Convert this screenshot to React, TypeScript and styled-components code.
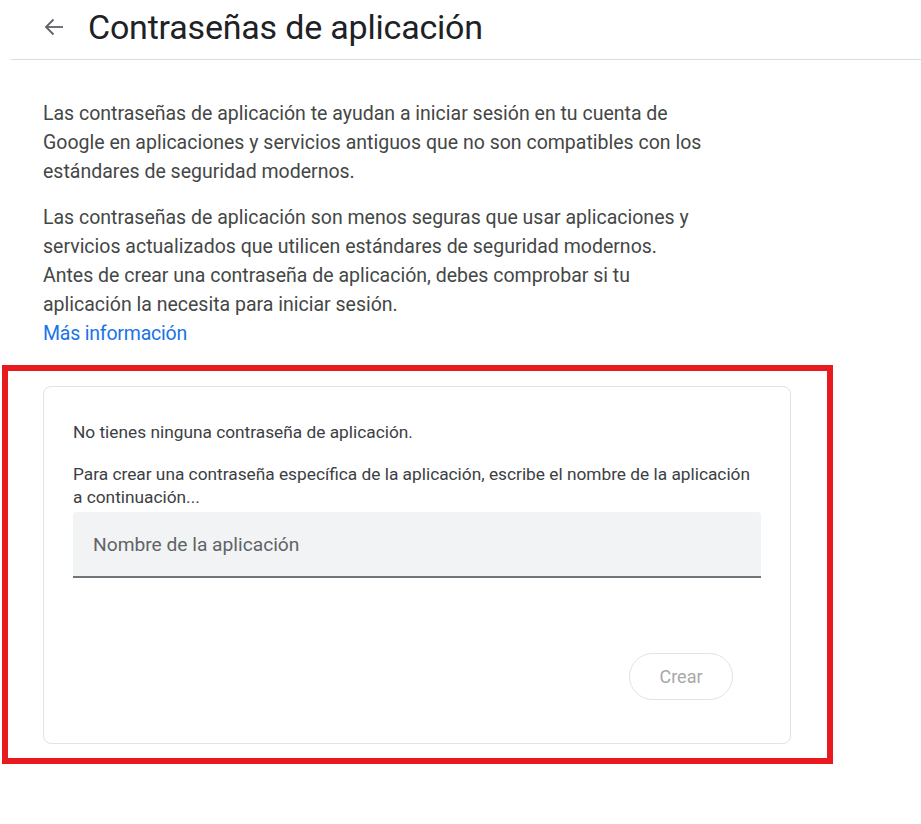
import React from 'react';
import styled, { createGlobalStyle } from 'styled-components';

const GlobalStyle = createGlobalStyle`
  body {
    margin: 0;
    background: #fff;
    font-family: Roboto, "Liberation Sans", Arial, sans-serif;
    color: #3c4043;
  }
`;

const Page = styled.div`
  width: 921px;
  min-height: 824px;
  background: #fff;
`;

const Header = styled.header`
  display: flex;
  align-items: center;
  gap: 24px;
  height: 60px;
  margin-left: 11px;
  padding-left: 33px;
  border-bottom: 1px solid #dadce0;
  box-sizing: border-box;
`;

const BackButton = styled.button`
  display: flex;
  align-items: center;
  justify-content: center;
  padding: 0;
  border: none;
  background: none;
  cursor: pointer;
  color: #5f6368;
  margin-top: -6px;
`;

const Title = styled.h1`
  margin: -6px 0 0;
  font-family: Roboto, "Open Sans", sans-serif;
  font-size: 34px;
  font-weight: 400;
  color: #202124;
  letter-spacing: -0.2px;
`;

const Intro = styled.section`
  padding: 39px 0 0 43px;
`;

const Paragraph = styled.p`
  margin: 0 0 17px;
  font-size: 19.5px;
  line-height: 29px;
  color: #444746;
  white-space: nowrap;
`;

const MoreLink = styled.a`
  color: #1a73e8;
  text-decoration: none;
  letter-spacing: -0.2px;
`;

const Highlight = styled.div`
  width: 831px;
  margin: 3px 0 0 2px;
  padding: 15px 36px 14px 35px;
  border: 6px solid #e8191f;
  box-sizing: border-box;
`;

const Card = styled.div`
  border: 1px solid #e3e3e3;
  border-radius: 8px;
  padding: 34px 29px 43px;
  display: flex;
  flex-direction: column;
`;

const CardText = styled.p<{ $gap?: number }>`
  margin: 0 0 ${p => p.$gap ?? 0}px;
  font-size: 17.3px;
  line-height: 23px;
  color: #3c4043;
  white-space: nowrap;
`;

const Field = styled.input`
  height: 66px;
  margin-top: 3px;
  padding: 0 20px;
  border: none;
  border-bottom: 2px solid #70757a;
  border-radius: 4px 4px 0 0;
  background: #f1f3f4;
  font-family: inherit;
  font-size: 19.2px;
  color: #202124;
  box-sizing: border-box;
  outline: none;

  &::placeholder {
    color: #5f6368;
  }
`;

const Actions = styled.div`
  display: flex;
  justify-content: flex-end;
  padding-right: 28px;
  margin-top: 75px;
`;

const CreateButton = styled.button`
  width: 104px;
  height: 47px;
  border: 1px solid #e3e3e3;
  border-radius: 24px;
  background: #fff;
  font-family: inherit;
  font-size: 18px;
  color: #a8a8a8;
  cursor: default;
`;

const BackArrow = () => (
  <svg width="20" height="20" viewBox="0 0 20 20" fill="none" stroke="currentColor" strokeWidth="1.8">
    <path d="M19 10H2" />
    <path d="M9.5 2.5 2 10l7.5 7.5" />
  </svg>
);

export default function App() {
  return (
    <Page>
      <GlobalStyle />
      <Header>
        <BackButton aria-label="Atrás">
          <BackArrow />
        </BackButton>
        <Title>Contraseñas de aplicación</Title>
      </Header>
      <Intro>
        <Paragraph>
          Las contraseñas de aplicación te ayudan a iniciar sesión en tu cuenta de
          <br />
          Google en aplicaciones y servicios antiguos que no son compatibles con los
          <br />
          estándares de seguridad modernos.
        </Paragraph>
        <Paragraph>
          Las contraseñas de aplicación son menos seguras que usar aplicaciones y
          <br />
          servicios actualizados que utilicen estándares de seguridad modernos.
          <br />
          Antes de crear una contraseña de aplicación, debes comprobar si tu
          <br />
          aplicación la necesita para iniciar sesión.
          <br />
          <MoreLink href="#">Más información</MoreLink>
        </Paragraph>
      </Intro>
      <Highlight>
        <Card>
          <CardText $gap={19}>No tienes ninguna contraseña de aplicación.</CardText>
          <CardText>
            Para crear una contraseña específica de la aplicación, escribe el nombre de la aplicación
            <br />a continuación...
          </CardText>
          <Field placeholder="Nombre de la aplicación" />
          <Actions>
            <CreateButton disabled>Crear</CreateButton>
          </Actions>
        </Card>
      </Highlight>
    </Page>
  );
}
